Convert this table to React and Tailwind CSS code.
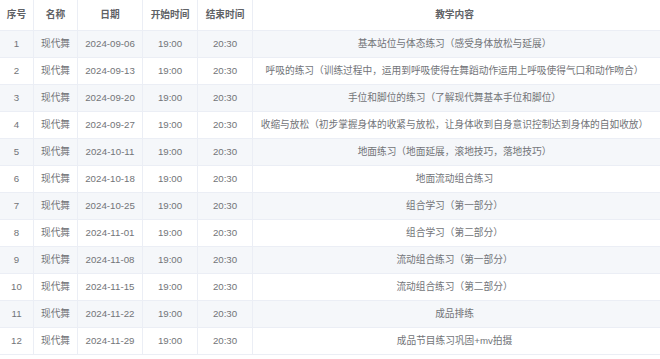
import React from "react";

const rows = [
  ["1", "2024-09-06", "基本站位与体态练习（感受身体放松与延展）"],
  ["2", "2024-09-13", "呼吸的练习（训练过程中，运用到呼吸使得在舞蹈动作运用上呼吸使得气口和动作吻合）"],
  ["3", "2024-09-20", "手位和脚位的练习（了解现代舞基本手位和脚位）"],
  ["4", "2024-09-27", "收缩与放松（初步掌握身体的收紧与放松，让身体收到自身意识控制达到身体的自如收放）"],
  ["5", "2024-10-11", "地面练习（地面延展，滚地技巧，落地技巧）"],
  ["6", "2024-10-18", "地面流动组合练习"],
  ["7", "2024-10-25", "组合学习（第一部分）"],
  ["8", "2024-11-01", "组合学习（第二部分）"],
  ["9", "2024-11-08", "流动组合练习（第一部分）"],
  ["10", "2024-11-15", "流动组合练习（第二部分）"],
  ["11", "2024-11-22", "成品排练"],
  ["12", "2024-11-29", "成品节目练习巩固+mv拍摄"],
];

const cell = "flex items-center justify-center whitespace-nowrap border-r border-[#ebeef5]";

const Row = ({ cols, header, striped }) => (
  <div
    className={`flex border-b border-[#ebeef5] ${header ? "h-[31px] font-bold text-[#606266]" : "h-[27px] text-[#727478]"} ${striped ? "bg-[#f5f7fa]" : "bg-white"}`}
  >
    <div className={`${cell} w-[34px]`}>{cols[0]}</div>
    <div className={`${cell} w-[44px]`}>{cols[1]}</div>
    <div className={`${cell} w-[65px]`}>{cols[2]}</div>
    <div className={`${cell} w-[55px]`}>{cols[3]}</div>
    <div className={`${cell} w-[55px]`}>{cols[4]}</div>
    <div className="flex flex-1 items-center justify-center whitespace-nowrap pr-[4px]">{cols[5]}</div>
  </div>
);

export default function App() {
  return (
    <div
      className="w-[660px] h-[359px] overflow-hidden bg-white text-[9.7px]"
      style={{ fontFamily: '"Liberation Sans", "Noto Sans CJK SC", sans-serif' }}
    >
      <Row header cols={["序号", "名称", "日期", "开始时间", "结束时间", "教学内容"]} />
      {rows.map(([n, date, content], i) => (
        <Row
          key={n}
          striped={i % 2 === 0}
          cols={[n, "现代舞", date, "19:00", "20:30", content]}
        />
      ))}
    </div>
  );
}
